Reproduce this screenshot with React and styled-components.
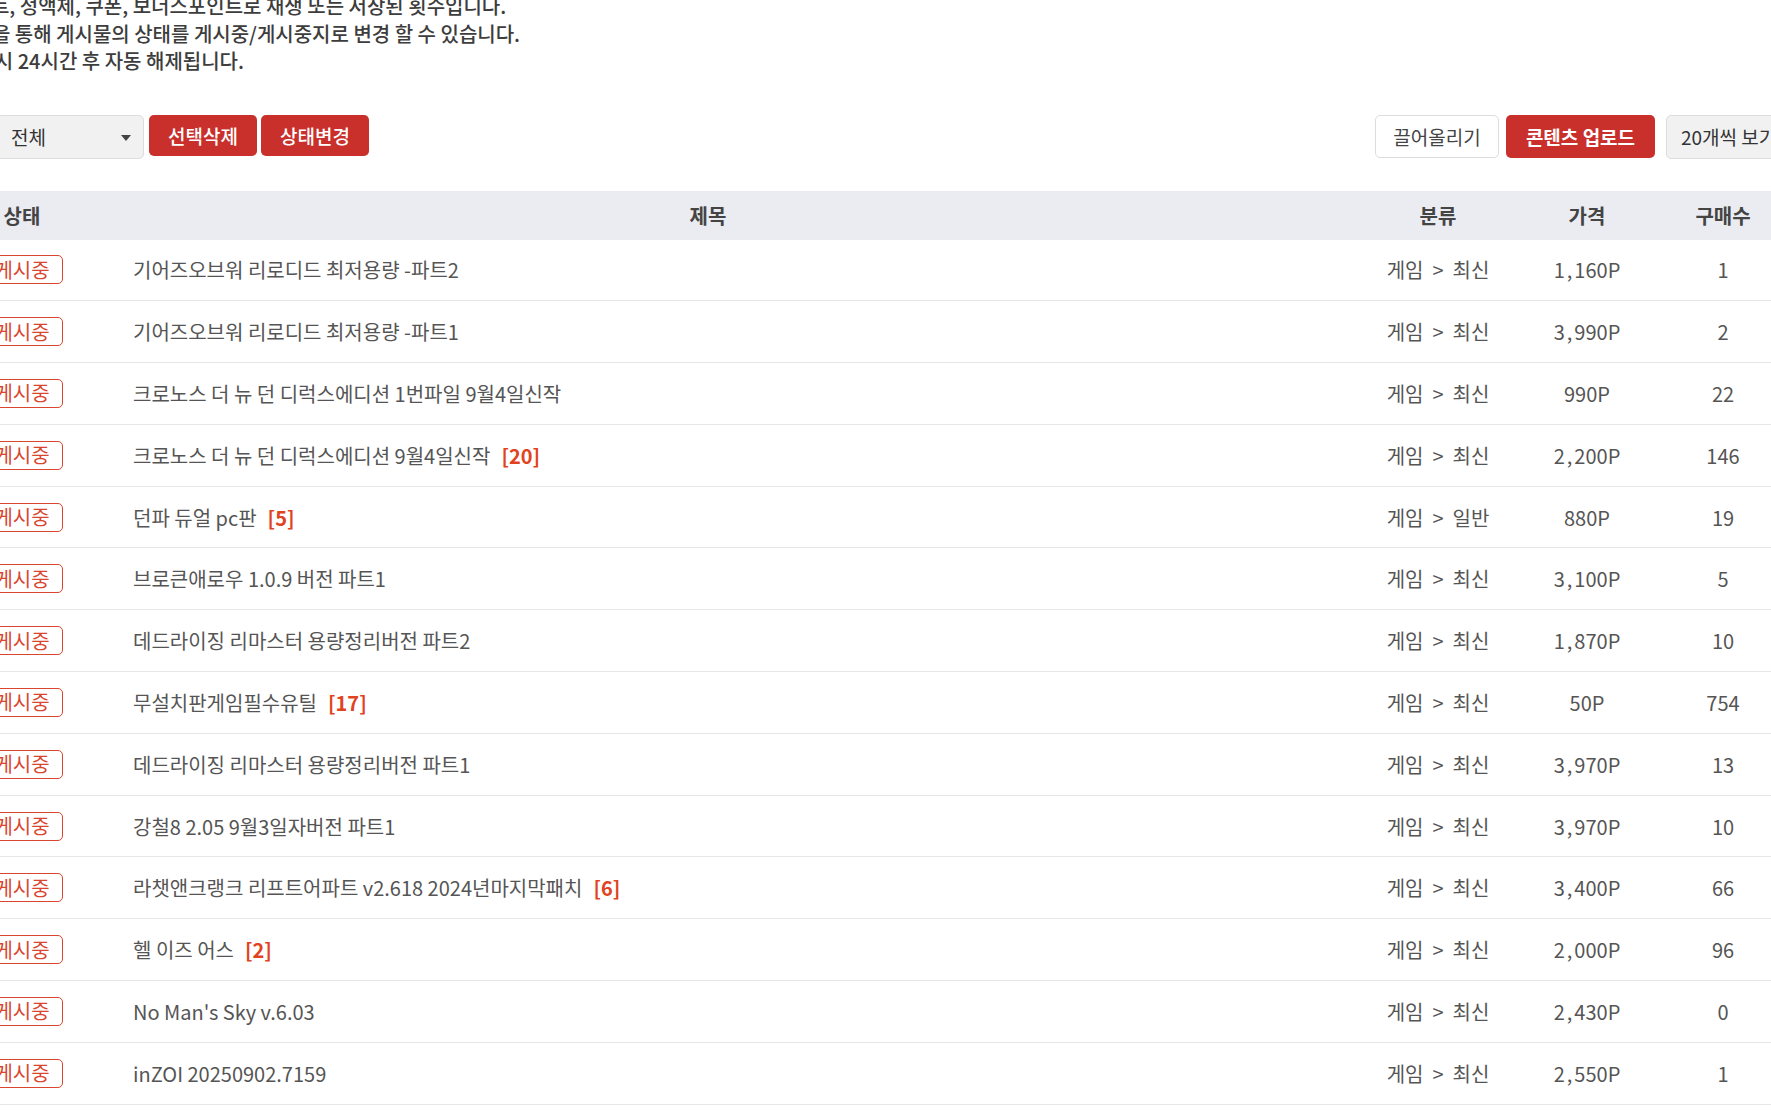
import styled, { createGlobalStyle } from 'styled-components';

const GlobalStyle = createGlobalStyle`
  html, body {
    margin: 0;
    padding: 0;
    background: #fff;
    overflow: hidden;
  }
  body {
    font-family: "Noto Sans CJK KR", "Noto Sans", sans-serif;
    color: #555;
  }
  * { box-sizing: border-box; }
`;

// 화면이 좌측/상단으로 스크롤된 상태를 그대로 재현
const Page = styled.div`
  margin: -8px 0 0 -60px;
  width: 1870px;
`;

const Notice = styled.ul`
  list-style: none;
  margin: 0;
  padding: 0;
  font-size: 20px;
  line-height: 27.5px;
  color: #3d3d3d;
  font-weight: 500;
`;

const NoticeLine = styled.li`
  margin-left: ${(p) => p.$shift}px;
  white-space: nowrap;
`;

const Toolbar = styled.div`
  display: flex;
  justify-content: space-between;
  align-items: flex-start;
  margin-top: 40px;
  padding-left: 56px;
`;

const Group = styled.div`
  display: flex;
  align-items: flex-start;
`;

const SelectBox = styled.div`
  position: relative;
  display: flex;
  align-items: center;
  flex: none;
  width: ${(p) => p.$width}px;
  height: 44px;
  margin-left: ${(p) => p.$ml || 0}px;
  padding: 0 14px;
  background: #f1f1f1;
  border: 1px solid #ddd;
  border-radius: 5px;
  font-size: 19px;
  color: #333;
  white-space: nowrap;
  &::after {
    content: '';
    position: absolute;
    right: 12px;
    top: 19px;
    border-left: 5px solid transparent;
    border-right: 5px solid transparent;
    border-top: 6px solid #444;
  }
`;

const RedButton = styled.button`
  flex: none;
  height: ${(p) => (p.$big ? 43 : 41)}px;
  width: ${(p) => p.$width}px;
  margin: 0 0 0 ${(p) => p.$ml || 0}px;
  padding: 0;
  border: none;
  border-radius: 5px;
  background: #c9302c;
  color: #fff;
  font-family: inherit;
  font-size: 19px;
  font-weight: ${(p) => (p.$big ? 700 : 500)};
  cursor: pointer;
`;

const GhostButton = styled.button`
  flex: none;
  height: 43px;
  width: 124px;
  margin: 0;
  padding: 0;
  border: 1px solid #ddd;
  border-radius: 5px;
  background: #fff;
  color: #444;
  font-family: inherit;
  font-size: 19px;
  cursor: pointer;
`;

const Table = styled.div`
  margin-top: 32px;
  width: 1868px;
`;

const cols = '28px 108px 1264px 196px 102px 170px';

const HeadRow = styled.div`
  display: grid;
  grid-template-columns: ${cols};
  height: 49px;
  background: #ebecf1;
  align-items: center;
  font-size: 20px;
  font-weight: 700;
  color: #444;
`;

const Row = styled.div`
  display: grid;
  grid-template-columns: ${cols};
  height: 61.8px;
  align-items: center;
  border-bottom: 1px solid #e6e6e6;
  font-size: 20px;
  color: #555;
`;

const Cell = styled.div`
  display: flex;
  justify-content: ${(p) => (p.$left ? 'flex-start' : 'center')};
  padding-left: ${(p) => (p.$left ? 57 : 0)}px;
  word-spacing: ${(p) => (p.$wide ? 4.5 : 0)}px;
  white-space: pre;
`;

const Badge = styled.span`
  display: inline-flex;
  align-items: center;
  height: 29px;
  padding: 0 12px;
  border: 1px solid #d9452f;
  border-radius: 5px;
  color: #d9452f;
  font-size: 20px;
  line-height: 1;
`;

const Count = styled.span`
  margin-left: 11px;
  color: #e0431e;
  font-weight: 700;
`;

const Comma = styled.span`
  margin: 0 2px;
`;

const rows = [
  ['기어즈오브워 리로디드 최저용량 -파트2', null, '게임 > 최신', '1,160P', '1'],
  ['기어즈오브워 리로디드 최저용량 -파트1', null, '게임 > 최신', '3,990P', '2'],
  ['크로노스 더 뉴 던 디럭스에디션 1번파일 9월4일신작', null, '게임 > 최신', '990P', '22'],
  ['크로노스 더 뉴 던 디럭스에디션 9월4일신작', 20, '게임 > 최신', '2,200P', '146'],
  ['던파 듀얼 pc판', 5, '게임 > 일반', '880P', '19'],
  ['브로큰애로우 1.0.9 버전 파트1', null, '게임 > 최신', '3,100P', '5'],
  ['데드라이징 리마스터 용량정리버전 파트2', null, '게임 > 최신', '1,870P', '10'],
  ['무설치판게임필수유틸', 17, '게임 > 최신', '50P', '754'],
  ['데드라이징 리마스터 용량정리버전 파트1', null, '게임 > 최신', '3,970P', '13'],
  ['강철8 2.05 9월3일자버전 파트1', null, '게임 > 최신', '3,970P', '10'],
  ['라챗앤크랭크 리프트어파트 v2.618 2024년마지막패치', 6, '게임 > 최신', '3,400P', '66'],
  ['헬 이즈 어스', 2, '게임 > 최신', '2,000P', '96'],
  ["No Man's Sky v.6.03", null, '게임 > 최신', '2,430P', '0'],
  ['inZOI 20250902.7159', null, '게임 > 최신', '2,550P', '1'],
];

const Price = ({ value }) => {
  const parts = value.split(',');
  return (
    <span>
      {parts.map((part, i) => (
        <span key={i}>
          {i > 0 && <Comma>,</Comma>}
          {part}
        </span>
      ))}
    </span>
  );
};

export default function App() {
  return (
    <>
      <GlobalStyle />
      <Page>
        <Notice>
          <NoticeLine $shift={-80}>· 구매수는 포인트, 정액제, 쿠폰, 보너스포인트로 재생 또는 저장된 횟수입니다.</NoticeLine>
          <NoticeLine $shift={-79}>· 상태변경 버튼을 통해 게시물의 상태를 게시중/게시중지로 변경 할 수 있습니다.</NoticeLine>
          <NoticeLine $shift={-99}>· 끌어올리기 사용 시 24시간 후 자동 해제됩니다.</NoticeLine>
        </Notice>

        <Toolbar>
          <Group>
            <SelectBox $width={148}>전체</SelectBox>
            <RedButton $width={108} $ml={5}>선택삭제</RedButton>
            <RedButton $width={108} $ml={4}>상태변경</RedButton>
          </Group>
          <Group>
            <GhostButton>끌어올리기</GhostButton>
            <RedButton $big $width={149} $ml={7}>콘텐츠 업로드</RedButton>
            <SelectBox $width={144} $ml={11}>20개씩 보기</SelectBox>
          </Group>
        </Toolbar>

        <Table>
          <HeadRow>
            <Cell />
            <Cell>상태</Cell>
            <Cell>제목</Cell>
            <Cell>분류</Cell>
            <Cell>가격</Cell>
            <Cell>구매수</Cell>
          </HeadRow>
          {rows.map(([title, count, cat, price, buys], i) => (
            <Row key={i}>
              <Cell />
              <Cell>
                <Badge>게시중</Badge>
              </Cell>
              <Cell $left>
                {title}
                {count !== null && <Count>[{count}]</Count>}
              </Cell>
              <Cell $wide>{cat}</Cell>
              <Cell>
                <Price value={price} />
              </Cell>
              <Cell>{buys}</Cell>
            </Row>
          ))}
        </Table>
      </Page>
    </>
  );
}
